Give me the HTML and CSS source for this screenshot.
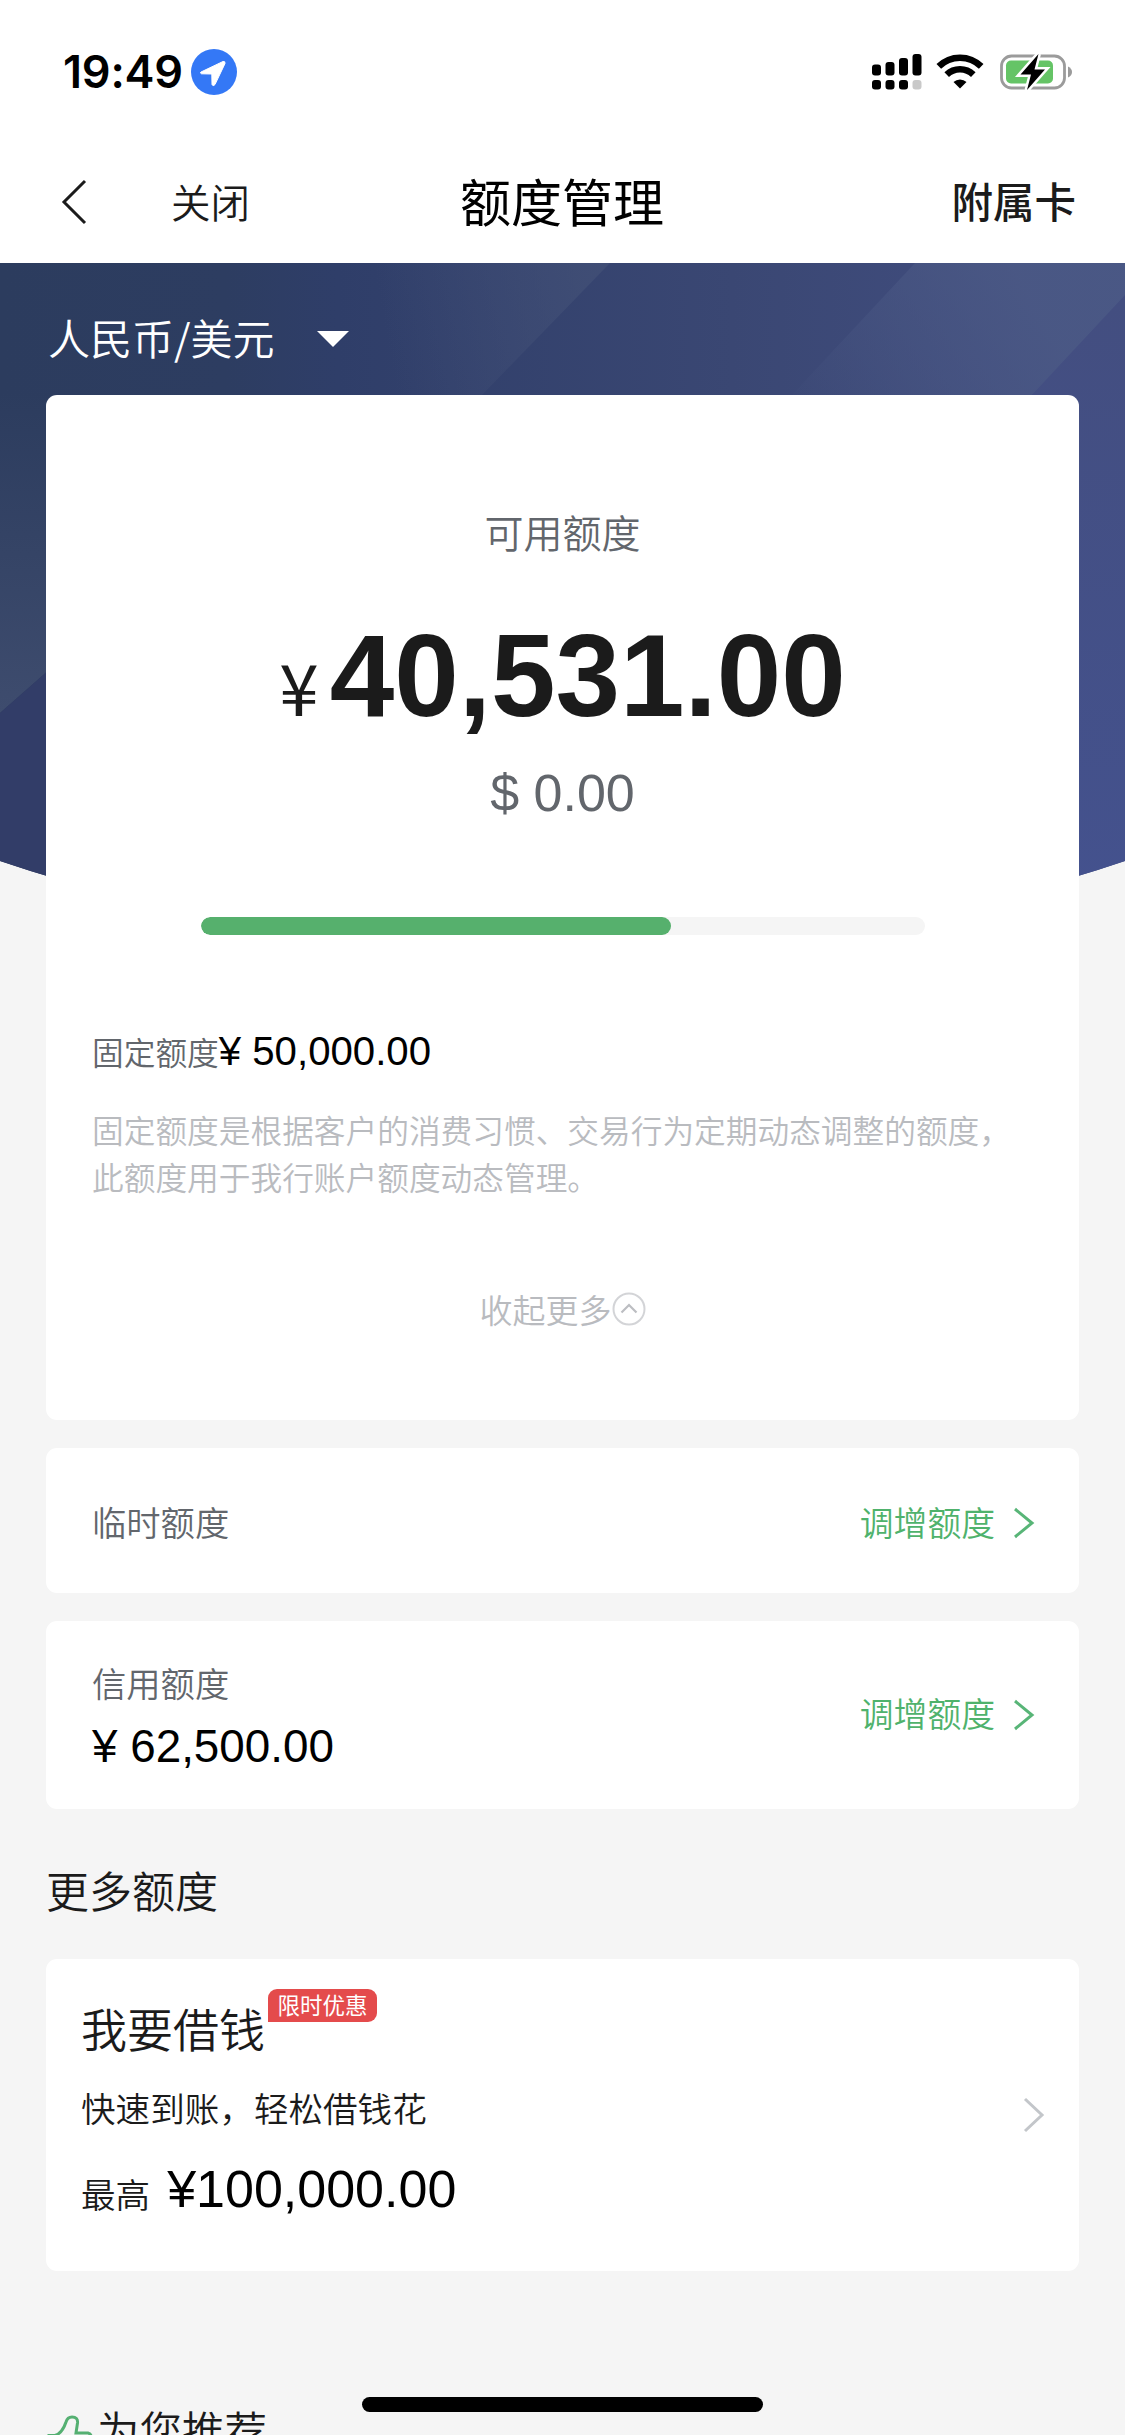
FILE: index.html
```html
<!DOCTYPE html>
<html lang="zh-CN">
<head>
<meta charset="utf-8">
<title>额度管理</title>
<link rel="stylesheet" href="styles.css">
</head>
<body>
<div class="screen">
  <div class="status">
    <span class="time">19:49</span>
    <svg class="loc" viewBox="0 0 46 46" width="46" height="46"><circle cx="23" cy="23" r="23" fill="#3478f6"/><path d="M10 23 L32 12.500 Q34.500 12 34 14.500 L24 35.500 Q22 38 21 35.500 L20.800 25 L10.500 24.800 Q8.600 24 10 23Z" fill="#fff" stroke="#fff" stroke-width="1"/></svg>
    <div class="status-icons">
      <svg viewBox="0 0 50 36" width="50" height="36">
        <g fill="#000"><rect x="0" y="10.5" width="9" height="11" rx="3"/><rect x="13.5" y="8" width="9" height="13.500" rx="3"/><rect x="27" y="4" width="9" height="17.500" rx="3"/><rect x="40.500" y="0" width="9" height="21.500" rx="3"/><rect x="0" y="26" width="9" height="9.500" rx="3"/><rect x="13.5" y="26" width="9" height="9.500" rx="3"/><rect x="27" y="26" width="9" height="9.500" rx="3"/></g><rect x="40.5" y="26" width="9" height="9.500" rx="3" fill="#c9c9c9"/>
      </svg>
      <svg class="wifi" viewBox="0 0 48 36" width="48" height="36"><g fill="none" stroke="#000" stroke-width="6.500"><path d="M2.800 12.400 A30 30 0 0 1 45.200 12.400"/><path d="M10.700 20.600 A19 19 0 0 1 37.300 20.600"/></g><path d="M24 34.500 L17.500 28 A9.500 9.500 0 0 1 30.500 28Z"/></svg>
      <svg class="battery" viewBox="0 0 74 38" width="74" height="38"><rect x="1.500" y="3" width="63" height="32" rx="10" fill="none" stroke="#9b9b9b" stroke-width="2.800"/><path d="M68 13.500 Q72 15.500 72 19 Q72 22.500 68 24.500Z" fill="#9b9b9b"/><rect x="6" y="7.500" width="47" height="23" rx="5" fill="#65c466"/><path d="M38.500 1 L20.500 21.500 H31 L27 37 L45 16.500 H34.500Z" fill="#000" stroke="#fff" stroke-width="5" paint-order="stroke"/></svg>
    </div>
  </div>
  <div class="nav">
    <svg class="back" viewBox="0 0 26 46" width="26" height="46"><path d="M24 2 L3 23 L24 44" fill="none" stroke="#1b1b1b" stroke-width="3"/></svg>
    <span class="close">关闭</span>
    <h1 class="title">额度管理</h1>
    <span class="side">附属卡</span>
  </div>
  <main class="body">
    <svg class="banner" viewBox="0 0 1125 680" width="1125" height="680" preserveAspectRatio="none">
      <defs>
        <linearGradient id="base" x1="0" y1="0" x2="1" y2="0"><stop offset="0" stop-color="#2c3c5e"/><stop offset=".2" stop-color="#2d3d61"/><stop offset=".3" stop-color="#2f3e69"/><stop offset=".65" stop-color="#3a4773"/><stop offset="1" stop-color="#434f83"/></linearGradient>
        <linearGradient id="ray1" x1="380" y1="40" x2="590" y2="0" gradientUnits="userSpaceOnUse"><stop offset="0" stop-color="#435177" stop-opacity="0"/><stop offset="1" stop-color="#435177" stop-opacity=".7"/></linearGradient>
        <linearGradient id="ray2" x1="790" y1="134" x2="1010" y2="0" gradientUnits="userSpaceOnUse"><stop offset="0" stop-color="#4b5985" stop-opacity=".05"/><stop offset="1" stop-color="#4b5985" stop-opacity=".85"/></linearGradient>
        <linearGradient id="left" x1="0" y1="0" x2="0" y2="1"><stop offset="0" stop-color="#2c3c5e"/><stop offset="1" stop-color="#3e4c6e"/></linearGradient>
        <linearGradient id="right" x1="0" y1="0" x2="0" y2="1"><stop offset="0" stop-color="#434e80"/><stop offset="1" stop-color="#44528f"/></linearGradient>
        <clipPath id="arch"><path d="M0 0 H1125 V598 Q885 680 562 680 Q240 680 0 598Z"/></clipPath>
      </defs>
      <g clip-path="url(#arch)">
        <rect width="1125" height="680" fill="url(#base)"/>
        <path d="M330 0 H610 L480 134 H290Z" fill="url(#ray1)"/>
        <path d="M915 0 H1125 V40 L1030 134 H790Z" fill="url(#ray2)"/>
        <path d="M1125 32 V680 H1075 V134 H1030Z" fill="url(#right)"/>
        <path d="M0 130 H50 V406 L0 450Z" fill="url(#left)"/>
        <path d="M50 406 V680 H0 V450Z" fill="#323d68"/>
      </g>
    </svg>
    <div class="currency"><span>人民币/美元</span><svg viewBox="0 0 32 16" width="32" height="16"><path d="M0 0 H32 L16 16Z" fill="#fff"/></svg></div>
    <section class="card quota">
      <div class="quota-label">可用额度</div>
      <div class="amount"><span class="yen">¥</span><span class="num">40,531.00</span></div>
      <div class="usd">$ 0.00</div>
      <div class="bar"><div class="bar-fill"></div></div>
      <div class="fixed"><span class="fixed-label">固定额度</span><span class="fixed-num">¥ 50,000.00</span></div>
      <p class="desc">固定额度是根据客户的消费习惯、交易行为定期动态调整的额度，<br>此额度用于我行账户额度动态管理。</p>
      <div class="fold"><span>收起更多</span><svg viewBox="0 0 34 34" width="34" height="34"><circle cx="17" cy="17" r="15.500" fill="none" stroke="#d3d4d7" stroke-width="2"/><path d="M9.500 20.500 L17 13 L24.500 20.500" fill="none" stroke="#bcbec2" stroke-width="2.200"/></svg></div>
    </section>
    <section class="card row temp">
      <span class="row-label">临时额度</span>
      <span class="link"><span class="link-text">调增额度</span><svg viewBox="0 0 22 32" width="22" height="32"><path d="M2 2 L19 16 L2 30" fill="none" stroke="#58b577" stroke-width="3"/></svg></span>
    </section>
    <section class="card row credit">
      <div class="credit-text"><span class="row-label">信用额度</span><span class="credit-num">¥ 62,500.00</span></div>
      <span class="link"><span class="link-text">调增额度</span><svg viewBox="0 0 22 32" width="22" height="32"><path d="M2 2 L19 16 L2 30" fill="none" stroke="#58b577" stroke-width="3"/></svg></span>
    </section>
    <h2 class="section-title">更多额度</h2>
    <section class="card row loan">
      <div class="loan-text">
        <div class="loan-head"><span>我要借钱</span><span class="badge">限时优惠</span></div>
        <div class="loan-sub">快速到账，轻松借钱花</div>
        <div class="loan-max"><span>最高</span><span class="loan-num">¥100,000.00</span></div>
      </div>
      <svg class="loan-arrow" viewBox="0 0 22 36" width="22" height="36"><path d="M2 2 L19 18 L2 34" fill="none" stroke="#c3c6ca" stroke-width="3"/></svg>
    </section>
    <div class="recommend"><svg viewBox="0 0 46 46" width="46" height="46"><path d="M2 20.500 H8 C13 19 17 13 19 7 C20 3.500 22 2 25 2 C29 2 31 4 30.500 8 L29 18 H41 Q45 19 44 24 L40 41 Q39 44 35 44 H2Z" fill="none" stroke="#55b072" stroke-width="3"/></svg><span>为您推荐</span></div>
  </main>
  <div class="home"></div>
</div>
</body>
</html>
```
FILE: styles.css
```css
* { box-sizing: border-box; margin: 0; padding: 0; }
body { font-family: "Liberation Sans", "Noto Sans CJK SC", sans-serif; background: #f5f5f5; color: #1b1b1b; }
svg { display: block; flex: none; }
.screen { position: relative; width: 1125px; height: 2435px; overflow: hidden; font-weight: 350; }
.status { display: flex; align-items: center; height: 143px; padding: 0 51px 0 63px; background: #fff; }
.time { width: 120px; font: 600 45px/54px Inter, sans-serif; color: #000; letter-spacing: -0.2px; white-space: nowrap; }
.loc { margin-left: 8px; }
.status-icons { display: flex; align-items: center; margin-left: auto; }
.wifi { margin-left: 14px; }
.battery { margin-left: 16px; }
.nav { display: grid; grid-template-columns: 61px 110px 200px 382px 1fr; align-items: center; height: 120px; padding: 0 49px 6px 0; background: #fff; font-family: "Noto Sans CJK SC", sans-serif; }
.back { grid-column: 2; margin-top: 4px; }
.close { font-size: 39.500px; }
.title { font-size: 51px; font-weight: 400; color: #000; text-align: center; }
.side { font-size: 41.500px; font-weight: 500; text-align: right; }
.body { position: relative; height: 2172px; padding: 0 46px; font-family: "Noto Sans CJK SC", sans-serif; }
.banner { position: absolute; left: 0; top: 0; z-index: -1; }
.currency { display: flex; align-items: center; gap: 43px; height: 132px; padding: 16px 0 0 2px; color: #fff; font-size: 42px; line-height: 60px; }
.currency svg { margin-top: 3px; }
.card { background: #fff; border-radius: 11px; }
.quota { display: flex; flex-direction: column; height: 1025px; padding: 0 46px; }
.quota-label { margin-top: 106px; font-size: 39px; line-height: 60px; text-align: center; color: #62666c; }
.amount { display: flex; justify-content: center; align-items: baseline; margin-top: 45px; height: 140px; line-height: 140px; }
.yen { font-size: 71px; font-weight: 400; margin-right: 11px; line-height: 1; }
.num { font: 700 116px/140px "Liberation Sans", sans-serif; }
.usd { margin-top: 17px; text-align: center; font: 400 52px/60px "Liberation Sans", sans-serif; color: #62666c; }
.bar { width: 724px; height: 18px; margin: 94px auto 0; border-radius: 9px; background: #f5f5f5; overflow: hidden; }
.bar-fill { width: 470px; height: 18px; border-radius: 9px; background: #56b06d; }
.fixed { display: flex; align-items: baseline; margin-top: 86px; height: 60px; line-height: 60px; }
.fixed-label { font-size: 31.700px; color: #62666c; }
.fixed-num { font: 400 40.200px/60px "Liberation Sans", sans-serif; color: #000; }
.desc { margin-top: 25px; font-size: 31.700px; line-height: 46.500px; color: #b9bbbf; white-space: nowrap; }
.fold { display: flex; justify-content: center; align-items: center; height: 60px; margin-top: 80px; font-size: 33px; color: #b9bbbf; }
.row { display: flex; align-items: center; justify-content: space-between; }
.row-label { font-size: 34.300px; line-height: 50px; color: #62666c; }
.temp { margin-top: 28px; height: 145px; padding: 1px 44px 0 46px; }
.credit { margin-top: 28px; height: 188px; padding: 0 44px 0 46px; }
.link { display: flex; align-items: center; gap: 18px; font-size: 33.800px; color: #4fb26c; }
.temp svg { margin-top: 3px; }
.credit .link-text { padding-bottom: 6px; }
.credit-text { display: flex; flex-direction: column; gap: 13px; }
.credit-num { font: 400 45.800px/54px "Liberation Sans", sans-serif; color: #000; }
.section-title { margin-top: 50px; font-size: 43px; line-height: 60px; font-weight: 350; }
.loan { margin-top: 40px; height: 312px; padding: 0 34px 0 35px; }
.loan-text { display: flex; flex-direction: column; padding-bottom: 12px; }
.loan-head { display: flex; align-items: flex-start; gap: 3px; font-size: 46px; line-height: 66px; height: 66px; }
.badge { width: 109px; height: 33px; margin-top: -5px; border-radius: 9px 9px 9px 0; background: #e44b4c; color: #fff; font-size: 22.500px; font-weight: 400; line-height: 31px; text-align: center; }
.loan-sub { margin-top: 22px; font-size: 34.600px; line-height: 50px; }
.loan-max { display: flex; align-items: baseline; gap: 17px; margin-top: 22px; font-size: 34.600px; line-height: 70px; height: 70px; }
.loan-max > :first-child { transform: translateY(1px); }
.loan-num { font: 400 52px/70px "Liberation Sans", sans-serif; color: #000; }
.recommend { display: flex; align-items: flex-start; gap: 4px; margin: 128px 0 0 1px; font-size: 42.500px; line-height: 60px; }
.recommend svg { margin-top: 16px; }
.home { position: absolute; left: 362px; top: 2397px; width: 401px; height: 15px; border-radius: 8px; background: #000; }
```
